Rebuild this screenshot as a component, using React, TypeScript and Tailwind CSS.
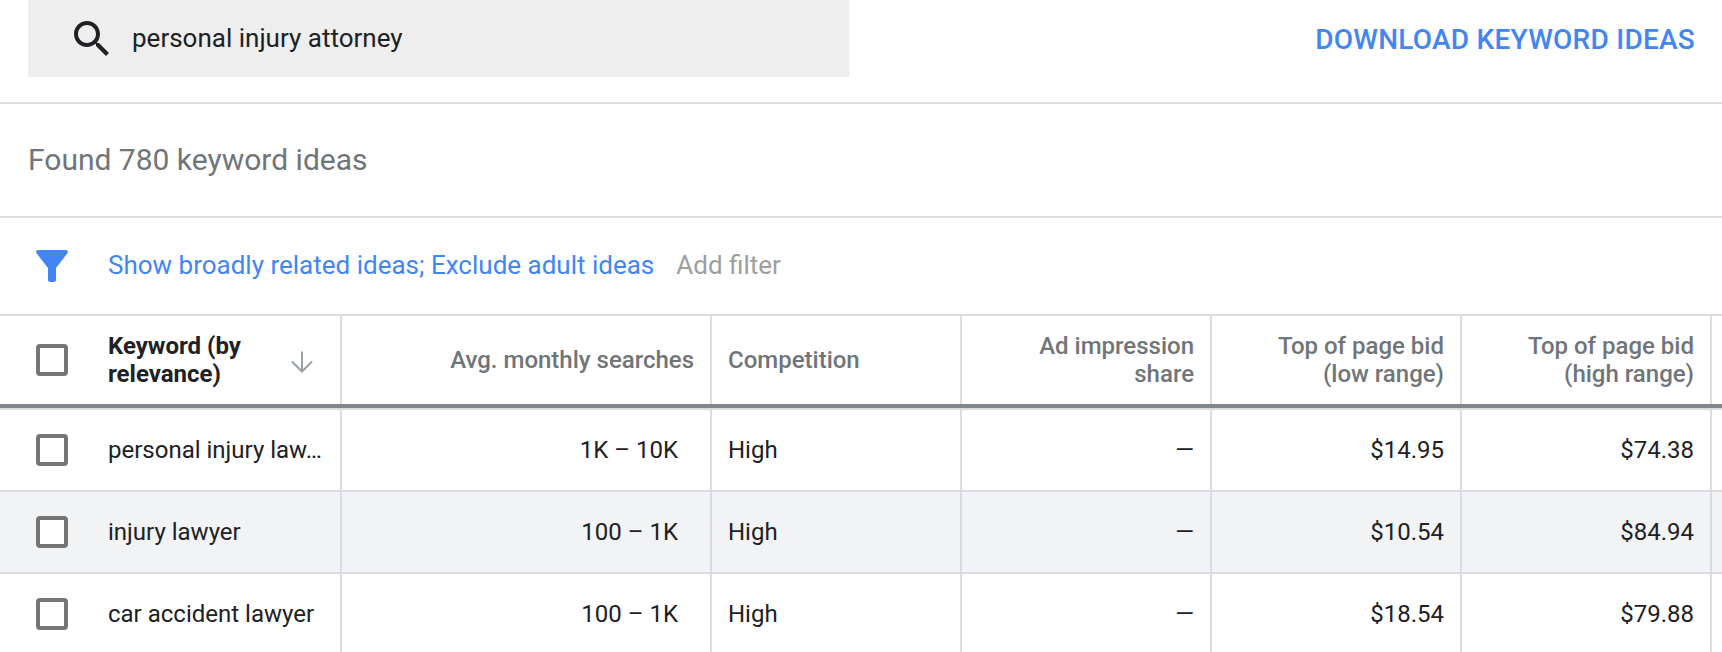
import React from "react";

const rows = [
  { keyword: "personal injury law…", searches: "1K – 10K", low: "$14.95", high: "$74.38", rowClass: "bg-white" },
  { keyword: "injury lawyer", searches: "100 – 1K", low: "$10.54", high: "$84.94", rowClass: "bg-[#f1f3f4]" },
  { keyword: "car accident lawyer", searches: "100 – 1K", low: "$18.54", high: "$79.88", rowClass: "bg-white" },
];

const gridCols = "grid grid-cols-[342px_370px_250px_250px_250px_250px_10px]";

const Checkbox: React.FC = () => (
  <div className="w-8 h-8 shrink-0 rounded-[4px] border-[4px] border-[#757575] bg-white" />
);

export default function App() {
  return (
    <div className="w-[1722px] h-[652px] overflow-hidden bg-white font-['Roboto',sans-serif] text-[#202124]">
      <div className="h-[104px] flex justify-between items-start border-b-2 border-[#dadce0]">
        <div className="ml-7 w-[821px] h-[77px] bg-[#eeeeee] flex items-center">
          <svg className="ml-10 w-12 h-12 text-[#202124]" viewBox="0 0 24 24" fill="currentColor">
            <path d="M15.5 14h-.79l-.28-.27C15.41 12.59 16 11.11 16 9.5 16 5.91 13.09 3 9.5 3S3 5.91 3 9.5 5.91 16 9.5 16c1.61 0 3.09-.59 4.23-1.57l.27.28v.79l5 4.99L20.49 19l-4.99-5zm-6 0C7.01 14 5 11.99 5 9.5S7.01 5 9.5 5 14 7.01 14 9.5 11.99 14 9.5 14z" />
          </svg>
          <span className="ml-4 text-[26px]">personal injury attorney</span>
        </div>
        <div className="mr-[27px] mt-[21px] text-[28px] leading-[38px] tracking-[0.25px] font-medium text-[#4285f4]">DOWNLOAD KEYWORD IDEAS</div>
      </div>

      <div className="h-[114px] flex items-center pl-7 pb-[2px] border-b-2 border-[#dadce0] text-[30px] text-[#70757a]">
        Found 780 keyword ideas
      </div>

      <div className="h-[98px] flex items-center pl-7 border-b-2 border-[#dadce0]">
        <svg className="w-12 h-12 text-[#4285f4]" viewBox="0 0 24 24" fill="currentColor">
          <path d="M4.25 5.61C6.27 8.2 10 13 10 13v6c0 .55.45 1 1 1h2c.55 0 1-.45 1-1v-6s3.72-4.8 5.74-7.39c.51-.66.04-1.61-.79-1.61H5.04c-.83 0-1.3.95-.79 1.61z" />
        </svg>
        <span className="ml-8 mb-[2px] text-[26px] text-[#4285f4]">Show broadly related ideas; Exclude adult ideas</span>
        <span className="ml-[22px] mb-[2px] text-[26px] text-[#9e9e9e]">Add filter</span>
      </div>

      <div className={`${gridCols} h-[92px] border-b-4 border-[#80868b] text-[24px] leading-[28px] font-medium text-[#70757a]`}>
        <div className="flex items-center pl-9 border-r-2 border-[#dadce0]">
          <Checkbox />
          <div className="ml-10 w-[150px] font-bold text-[#202124]">Keyword (by relevance)</div>
          <svg className="ml-[32px] mt-1 w-6 h-6 text-[#9aa0a6]" viewBox="0 0 24 24" fill="none" stroke="currentColor" strokeWidth="2">
            <path d="M12 1.5v20M2 11.5l10 10 10-10" />
          </svg>
        </div>
        <div className="flex items-center justify-end pr-4 border-r-2 border-[#dadce0]">Avg. monthly searches</div>
        <div className="flex items-center pl-4 border-r-2 border-[#dadce0]">Competition</div>
        <div className="flex items-center justify-end text-right pr-4 border-r-2 border-[#dadce0]">Ad impression<br />share</div>
        <div className="flex items-center justify-end text-right pr-4 border-r-2 border-[#dadce0]">Top of page bid<br />(low range)</div>
        <div className="flex items-center justify-end text-right pr-4 border-r-2 border-[#dadce0]">Top of page bid<br />(high range)</div>
        <div />
      </div>
      <div className="h-[2px] bg-[#dadce0]" />

      {rows.map((row) => (
        <div key={row.keyword} className={`${gridCols} ${row.rowClass} h-[82px] border-b-2 border-[#dadce0] text-[24px]`}>
          <div className="flex items-center pl-9 border-r-2 border-[#dadce0]">
            <Checkbox />
            <div className="ml-10 whitespace-nowrap">{row.keyword}</div>
          </div>
          <div className="flex items-center justify-end pr-8 border-r-2 border-[#dadce0]">{row.searches}</div>
          <div className="flex items-center pl-4 border-r-2 border-[#dadce0]">High</div>
          <div className="flex items-center justify-end pr-4 border-r-2 border-[#dadce0]">—</div>
          <div className="flex items-center justify-end pr-4 border-r-2 border-[#dadce0]">{row.low}</div>
          <div className="flex items-center justify-end pr-4 border-r-2 border-[#dadce0]">{row.high}</div>
          <div />
        </div>
      ))}
    </div>
  );
}
